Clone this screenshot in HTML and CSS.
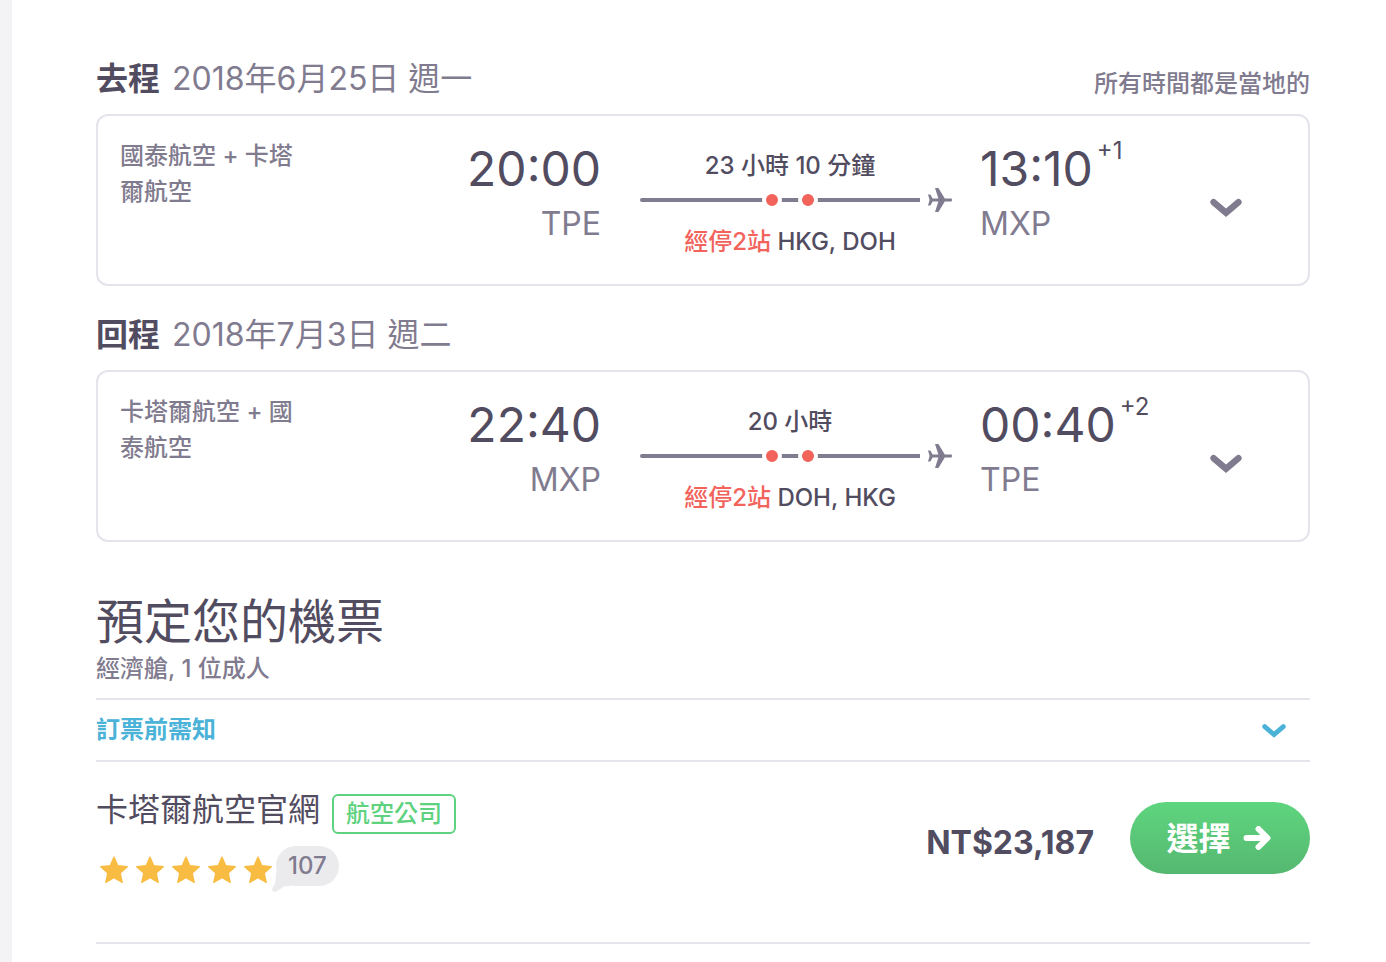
FILE: index.html
```html
<!DOCTYPE html>
<html lang="zh-Hant">
<head>
    <meta charset="UTF-8">
    <meta name="viewport" content="width=device-width, initial-scale=1.0">
    <title>預定您的機票</title>
    <link rel="stylesheet" href="styles.css">
</head>
<body>
    <!-- Shared icons -->
    <svg class="sprite" aria-hidden="true">
        <symbol id="chevron" viewBox="0 0 32 20">
            <path d="M3.600 4.200L16 14.800L28.400 4.200" fill="none" stroke="currentColor" stroke-width="6.400" stroke-linecap="round"/>
        </symbol>
        <symbol id="plane" viewBox="0 0 24 24">
            <path d="M7 0h3.400l6.400 10.600h6.400q.8 0 .8 1.400t-.8 1.400h-6.400L10.400 24H7l3.400-10.600H4.600L2.400 17.400H0L1.600 12L0 6.600h2.400l2.200 4h5.800z" fill="currentColor"/>
        </symbol>
        <symbol id="star" viewBox="0 0 36 40">
            <path d="M18 11l3.900 8.700 9.400 1-7 6.400 2 9.400L18 31.700l-8.300 4.800 2-9.400-7-6.400 9.400-1z" fill="currentColor" stroke="currentColor" stroke-width="1.200" stroke-linejoin="round"/>
        </symbol>
    </svg>

    <main class="page">
        <section class="leg">
            <header class="leg-header">
                <h2 class="leg-title">去程</h2>
                <span class="leg-date">2018年6月25日 週一</span>
                <span class="leg-note">所有時間都是當地的</span>
            </header>
            <div class="card">
                <div class="airlines">國泰航空 + 卡塔爾航空</div>
                <div class="departure">
                    <div class="time">20:00</div>
                    <div class="airport">TPE</div>
                </div>
                <div class="stops">
                    <div class="duration">23 小時 10 分鐘</div>
                    <div class="track">
                        <span class="line"></span>
                        <svg class="plane"><use href="#plane"/></svg>
                        <div class="dots"><span class="dot"></span><span class="dot"></span></div>
                    </div>
                    <div class="via"><span class="stop-count">經停2站</span> HKG, DOH</div>
                </div>
                <div class="arrival">
                    <div class="time">13:10<span class="offset">+1</span></div>
                    <div class="airport">MXP</div>
                </div>
                <button class="expand" type="button" aria-label="詳情"><svg><use href="#chevron"/></svg></button>
            </div>
        </section>

        <section class="leg">
            <header class="leg-header">
                <h2 class="leg-title">回程</h2>
                <span class="leg-date">2018年7月3日 週二</span>
            </header>
            <div class="card">
                <div class="airlines">卡塔爾航空 + 國泰航空</div>
                <div class="departure">
                    <div class="time">22:40</div>
                    <div class="airport">MXP</div>
                </div>
                <div class="stops">
                    <div class="duration">20 小時</div>
                    <div class="track">
                        <span class="line"></span>
                        <svg class="plane"><use href="#plane"/></svg>
                        <div class="dots"><span class="dot"></span><span class="dot"></span></div>
                    </div>
                    <div class="via"><span class="stop-count">經停2站</span> DOH, HKG</div>
                </div>
                <div class="arrival">
                    <div class="time">00:40<span class="offset">+2</span></div>
                    <div class="airport">TPE</div>
                </div>
                <button class="expand" type="button" aria-label="詳情"><svg><use href="#chevron"/></svg></button>
            </div>
        </section>

        <section class="booking">
            <h1>預定您的機票</h1>
            <p class="cabin">經濟艙, 1 位成人</p>
            <button class="notice" type="button">
                <span>訂票前需知</span>
                <svg><use href="#chevron"/></svg>
            </button>
            <div class="offer">
                <div class="agent">
                    <div class="agent-name">
                        <span>卡塔爾航空官網</span>
                        <span class="tag">航空公司</span>
                    </div>
                    <div class="rating">
                        <svg class="star"><use href="#star"/></svg>
                        <svg class="star"><use href="#star"/></svg>
                        <svg class="star"><use href="#star"/></svg>
                        <svg class="star"><use href="#star"/></svg>
                        <svg class="star"><use href="#star"/></svg>
                        <span class="reviews">
                            <svg class="tail" viewBox="0 0 24 24"><path d="M4 4C4 13 3 16 .6 19.600C-1 23 2 25 4.600 23.400L12 18.600Q14 18 18 18L20 8z" fill="currentColor"/></svg>
                            <span class="reviews-count">107</span>
                        </span>
                    </div>
                </div>
                <div class="price">NT$23,187</div>
                <button class="select-button" type="button">
                    <span>選擇</span>
                    <svg viewBox="0 0 28 24"><path d="M3.500 12H23M15.500 3L24.500 12L15.500 21" fill="none" stroke="currentColor" stroke-width="6" stroke-linecap="round" stroke-linejoin="round"/></svg>
                </button>
            </div>
        </section>
    </main>
</body>
</html>
```
FILE: styles.css
```css
* {
    box-sizing: border-box;
}
body {
    margin: 0;
    border-left: 12px solid #f3f3f6;
    background-color: white;
    color: #524c61;
    font-family: Inter, "Noto Sans CJK TC", sans-serif;
    font-size: 24px;
    font-weight: 500;
    line-height: 36px;
}
button {
    border: none;
    padding: 0;
    background: none;
    font-family: inherit;
    cursor: pointer;
}
svg {
    display: block;
}
.sprite {
    display: none;
}
.page {
    min-height: 100vh;
    padding: 30px 76px 0 84px;
}
.leg-header {
    display: flex;
    gap: 12px;
    padding: 25px 0 11px;
    font-size: 32px;
    line-height: 48px;
}
.leg-title {
    margin: 0;
    font-size: 32px;
    font-weight: bold;
}
.leg-date {
    color: #817b8f;
    font-weight: normal;
}
.leg-note {
    align-self: flex-end;
    margin-left: auto;
    color: #817b8f;
    font-size: 24px;
    line-height: 38px;
}
.card {
    display: grid;
    grid-template-columns: 180px 79fr 312px 59fr 80px;
    min-height: 172px;
    padding: 22px;
    border: 2px solid #e6e4eb;
    border-radius: 12px;
}
.airlines {
    color: #817b8f;
}
.departure {
    padding-right: 39px;
    text-align: right;
}
.arrival {
    padding-left: 28px;
}
.time {
    position: relative;
    font-size: 48px;
    font-weight: normal;
    line-height: 62px;
}
.offset {
    position: absolute;
    top: -3px;
    margin-left: 4px;
    font-size: 24px;
    line-height: 32px;
}
.airport {
    color: #817b8f;
    font-size: 32px;
    font-weight: normal;
    line-height: 48px;
}
.stops {
    padding-top: 10px;
    text-align: center;
}
.duration,
.via {
    padding-right: 12px;
}
.track {
    position: relative;
    display: flex;
    align-items: center;
    gap: 8px;
    margin-bottom: 8px;
    color: #817b8f;
}
.line {
    flex: 1;
    height: 4px;
    border-radius: 2px 0 0 2px;
    background-color: currentColor;
}
.plane {
    width: 24px;
    height: 32px;
}
.dots {
    position: absolute;
    inset: 0 12px 0 0;
    display: flex;
    align-items: center;
    justify-content: center;
    gap: 16px;
}
.dot {
    width: 20px;
    height: 20px;
    border: 4px solid white;
    border-radius: 10px;
    background-color: #f1635b;
}
.stop-count {
    color: #f1635b;
}
.expand {
    width: 40px;
    color: #817b8f;
}
.expand svg {
    width: 32px;
    height: 20px;
    margin: 16px auto 0;
}
.booking {
    padding-top: 50px;
}
h1 {
    margin: 0;
    font-size: 48px;
    font-weight: normal;
    line-height: 60px;
}
.cabin {
    margin: 0 0 12px;
    color: #817b8f;
    line-height: 34px;
}
.notice {
    display: flex;
    align-items: center;
    justify-content: space-between;
    width: 100%;
    padding: 12px 24px 12px 0;
    border-top: 2px solid #e6e4eb;
    border-bottom: 2px solid #e6e4eb;
    color: #4bb2d8;
    font-size: 24px;
    font-weight: bold;
    line-height: 36px;
}
.notice svg {
    width: 24px;
    height: 16px;
    margin-top: 2px;
}
.offer {
    display: flex;
    align-items: flex-start;
    padding: 24px 0 56px;
    border-bottom: 2px solid #e6e4eb;
}
.agent {
    flex: 1;
}
.agent-name {
    display: flex;
    gap: 12px;
    font-size: 32px;
    font-weight: normal;
    line-height: 48px;
}
.tag {
    height: 40px;
    margin-top: 8px;
    padding: 0 12px;
    border: 2px solid #5fd27f;
    border-radius: 6px;
    color: #5fd27f;
    font-size: 24px;
    font-weight: 500;
    line-height: 36px;
}
.rating {
    display: flex;
    margin-top: 12px;
}
.star {
    width: 36px;
    height: 40px;
    color: #f9bc42;
}
.reviews {
    position: relative;
    height: 40px;
    padding: 0 12px;
    border-radius: 20px;
    background-color: #ebebee;
    color: #817b8f;
    line-height: 40px;
}
.reviews-count {
    position: relative;
}
.tail {
    position: absolute;
    left: -4px;
    bottom: -6px;
    width: 24px;
    height: 24px;
    color: #ebebee;
}
.price {
    padding: 33px 36px 0 0;
    font-size: 32px;
    font-weight: bold;
    line-height: 48px;
}
.select-button {
    display: flex;
    align-items: center;
    justify-content: center;
    gap: 12px;
    width: 180px;
    height: 72px;
    margin-top: 16px;
    padding-right: 3px;
    border-radius: 36px;
    background: linear-gradient(#5fd57f, #55b870);
    color: white;
    font-size: 32px;
    font-weight: bold;
}
.select-button span {
    padding-bottom: 4px;
}
.select-button svg {
    width: 28px;
    height: 24px;
}
```
